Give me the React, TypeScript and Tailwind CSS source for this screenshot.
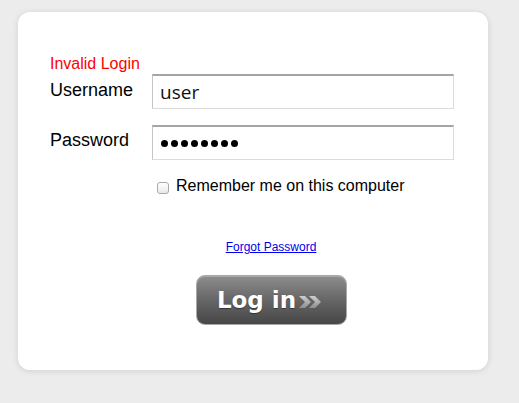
import React from "react";

export default function App() {
  return (
    <div className="min-h-[403px] w-[519px] bg-[#ececec] pt-[12px] pl-[18px]" style={{ fontFamily: '"Liberation Sans", Arial, sans-serif' }}>
      <div className="w-[470px] h-[358px] bg-white rounded-[12px] shadow-[0_1px_6px_rgba(0,0,0,0.12)] pt-[43px] pl-[32px]">
        <div className="text-[16px] leading-[18px] text-[#ff0000]">Invalid Login</div>
        <div className="mt-[1px] flex items-start">
          <label className="w-[102px] pt-[6px] text-[18px] leading-[21px] text-black">Username</label>
          <div className="w-[302px] h-[35px] border border-[#dcdcdc] border-t-[#a5a5a5] border-t-2 border-l-[#c4c4c4] flex items-center pl-[7px] text-[19px] text-[#111]" style={{ fontFamily: '"Open Sans", "DejaVu Sans", sans-serif' }}>
            user
          </div>
        </div>
        <div className="mt-[16px] flex items-start">
          <label className="w-[102px] pt-[5px] text-[18px] leading-[21px] text-black">Password</label>
          <div className="w-[302px] h-[35px] border border-[#dcdcdc] border-t-[#a5a5a5] border-t-2 border-l-[#c4c4c4] flex items-center pl-[8px] gap-[3px]">
            {Array.from({ length: 8 }).map((_, i) => (
              <span key={i} className="w-[7px] h-[7px] rounded-full bg-black inline-block" />
            ))}
          </div>
        </div>
        <div className="mt-[16px] ml-[107px] flex items-center h-[20px]">
          <span className="w-[12px] h-[12px] rounded-[3px] border border-[#a9a9a9] bg-gradient-to-b from-white to-[#e9e9e9] inline-block mt-[3px]" />
          <span className="ml-[7px] text-[16px] leading-[20px] text-black">Remember me on this computer</span>
        </div>
        <div className="mt-[44px] w-[442px] text-center text-[12px] leading-[14px]">
          <a className="text-[#0000ee] underline" href="#">Forgot Password</a>
        </div>
        <div className="mt-[21px] w-[442px] flex justify-center">
          <div className="w-[151px] h-[50px] rounded-[9px] border border-[#a8a8a8] bg-gradient-to-b from-[#8e8e8e] via-[#666666] to-[#474747] flex items-center justify-center shadow-[inset_0_1px_0_rgba(255,255,255,0.25)]">
            <span className="text-white font-bold text-[23px] leading-[26px] [text-shadow:0_1px_1px_rgba(0,0,0,0.4)]" style={{ fontFamily: '"DejaVu Sans", Verdana, sans-serif' }}>Log in</span>
            <svg width="26" height="14" viewBox="0 0 26 14" className="ml-[3px] mt-[4px]">
              <defs>
                <linearGradient id="cg" x1="0" y1="0" x2="0" y2="1">
                  <stop offset="0" stopColor="#cfcfcf" />
                  <stop offset="1" stopColor="#8f8f8f" />
                </linearGradient>
              </defs>
              <polygon points="0,1 6,1 12,7 6,13 0,13 6,7" fill="url(#cg)" />
              <polygon points="10,1 16,1 22,7 16,13 10,13 16,7" fill="url(#cg)" />
            </svg>
          </div>
        </div>
      </div>
    </div>
  );
}
